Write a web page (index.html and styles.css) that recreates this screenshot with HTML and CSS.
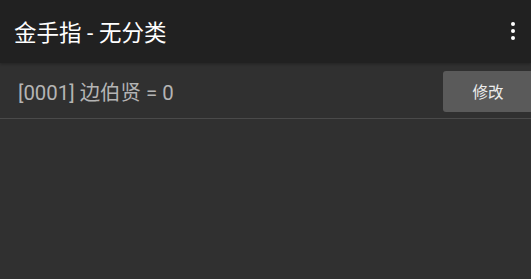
FILE: index.html
```html
<!DOCTYPE html>
<html lang="zh">
<head>
    <meta charset="UTF-8">
    <meta name="viewport" content="width=device-width, initial-scale=1.0">
    <title>金手指 - 无分类</title>
    <link rel="stylesheet" href="styles.css">
</head>
<body>
    <div class="toolbar">
        <div class="title">金手指 - 无分类</div>
        <div class="menu-btn">
            <svg width="4" height="18" viewBox="0 0 4 18">
                <circle cx="2" cy="2" r="2" fill="#fff"/>
                <circle cx="2" cy="9" r="2" fill="#fff"/>
                <circle cx="2" cy="16" r="2" fill="#fff"/>
            </svg>
        </div>
    </div>

    <div class="cheat-list">
        <div class="cheat-row">
            <div class="cheat-text">[0001] 边伯贤 = 0</div>
            <button class="edit-btn">修改</button>
        </div>
    </div>
</body>
</html>
```

FILE: styles.css
```css
body {
    margin: 0;
    padding: 0;
    height: 100vh;
    background-color: #303030;
    font-family: Roboto, "Noto Sans CJK SC", sans-serif;
    overflow: hidden;
}

.toolbar {
    height: 63px;
    background-color: #212121;
    display: flex;
    align-items: center;
    justify-content: space-between;
    padding: 0 16px 0 14px;
    box-shadow: 0 1px 3px rgba(0, 0, 0, 0.3);
}

.title {
    color: #ffffff;
    font-size: 22.5px;
    margin-top: -1px;
}

.menu-btn {
    display: flex;
    align-items: center;
    margin-top: -1px;
}

.cheat-row {
    height: 55px;
    display: flex;
    align-items: center;
    justify-content: space-between;
    padding-left: 18px;
    border-bottom: 1px solid #4a4a4a;
}

.cheat-text {
    color: #b4b4b4;
    font-size: 20.4px;
    margin-top: 1px;
}

.edit-btn {
    width: 96px;
    height: 41px;
    margin-right: -8px;
    margin-top: 1px;
    background-color: #5a5a5a;
    color: #ececec;
    border: none;
    border-radius: 3px;
    font-family: Roboto, "Noto Sans CJK SC", sans-serif;
    font-size: 15.5px;
    padding: 0 6px 0 0;
}
```
